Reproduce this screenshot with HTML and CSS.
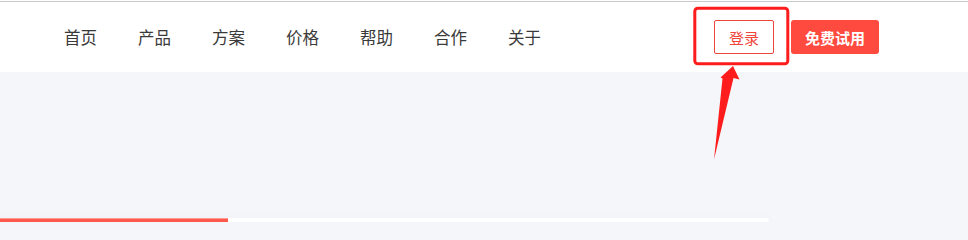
FILE: index.html
```html
<!DOCTYPE html>
<html lang="zh-CN">
<head>
<meta charset="utf-8">
<title>导航</title>
<link rel="stylesheet" href="styles.css">
</head>
<body>
<div class="topline"></div>
<header class="header">
  <nav class="nav">
    <a class="nav-item" href="#">首页</a>
    <a class="nav-item" href="#">产品</a>
    <a class="nav-item" href="#">方案</a>
    <a class="nav-item" href="#">价格</a>
    <a class="nav-item" href="#">帮助</a>
    <a class="nav-item" href="#">合作</a>
    <a class="nav-item" href="#">关于</a>
  </nav>
  <div class="actions">
    <a class="btn btn-login" href="#">登录</a>
    <a class="btn btn-trial" href="#">免费试用</a>
  </div>
</header>
<main class="main">
  <div class="card">
    <div class="card-tab"></div>
  </div>
</main>
<svg class="annotation" width="968" height="222" viewBox="0 0 968 222" aria-hidden="true">
  <rect x="694.8" y="8.3" width="93" height="55.5" rx="3" fill="none" stroke="#fe1c1c" stroke-width="3"/>
  <polygon points="733,66 739.5,79.5 733.5,78 714,159.5 722.5,78.5 720.5,77.5" fill="#fe1c1c"/>
</svg>
</body>
</html>
```

FILE: styles.css
```css
html {
  margin: 0;
  padding: 0;
  height: 222px;
  overflow: hidden;
}
body {
  margin: 0;
  padding: 0;
  width: 968px;
  height: 222px;
  overflow: hidden;
  background: #f5f6fa;
  font-family: "Noto Sans CJK SC", "Noto Sans", sans-serif;
  position: relative;
}
.topline {
  height: 1px;
  border-top: 1px solid #ffffff;
  background: #c9c9c9;
}
.header {
  height: 70px;
  background: #ffffff;
  display: flex;
  align-items: center;
  justify-content: space-between;
  padding: 0 89px 0 64px;
}
.nav {
  display: flex;
  gap: 41px;
}
.nav-item {
  font-size: 16.5px;
  line-height: 20px;
  color: #3a3a3a;
  text-decoration: none;
}
.actions {
  display: flex;
  align-items: center;
  gap: 17px;
}
.btn {
  display: flex;
  align-items: center;
  justify-content: center;
  height: 34px;
  box-sizing: border-box;
  font-size: 15px;
  text-decoration: none;
  border-radius: 2px;
}
.btn-login {
  width: 60px;
  border: 1px solid #f0453b;
  color: #f0453b;
}
.btn-trial {
  width: 88px;
  background: #ff4a3f;
  color: #ffffff;
  font-weight: 700;
  border-radius: 3px;
}
.main {
  padding-top: 146px;
}
.card {
  width: 769px;
  height: 4px;
  background: #ffffff;
  border-radius: 0 8px 0 0;
  box-shadow: 0 0 10px rgba(60, 70, 110, 0.04);
}
.card-tab {
  width: 228px;
  height: 4px;
  background: #ff584c;
  border-top: 1px solid #ff9a92;
  box-sizing: border-box;
}
.annotation {
  position: absolute;
  left: 0;
  top: 0;
  pointer-events: none;
}
```
